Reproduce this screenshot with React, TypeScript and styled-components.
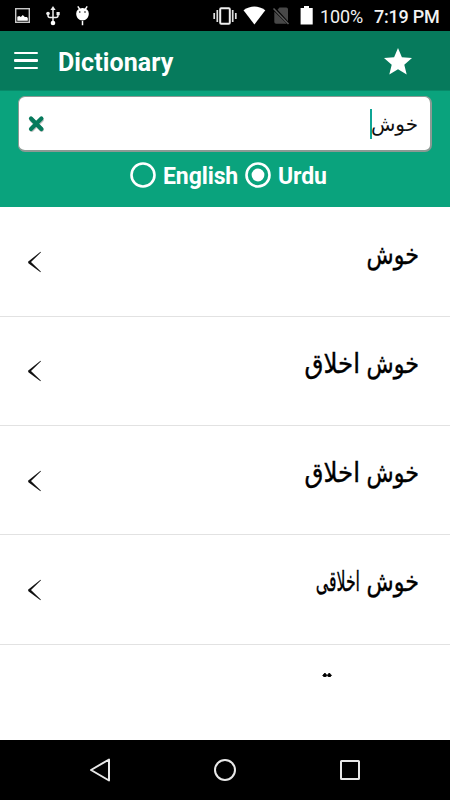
import React from "react";
import styled, { createGlobalStyle } from "styled-components";

const GlobalStyle = createGlobalStyle`
  * { box-sizing: border-box; }
  html, body { margin: 0; padding: 0; background: #fff; }
  body { font-family: Roboto, "Liberation Sans", sans-serif; }
`;

const Screen = styled.div`
  width: 450px;
  height: 800px;
  display: flex;
  flex-direction: column;
  overflow: hidden;
  background: #fff;
`;

const StatusBar = styled.div`
  height: 31px;
  flex: none;
  display: flex;
  background: #000;
  color: #f2f2f2;
`;

const StatusIcons = styled.svg<{ $w: number }>`
  width: ${(p) => p.$w}px;
  height: 31px;
  flex: none;
  display: block;
`;

const Spacer = styled.div`
  flex: 1;
`;

const Battery = styled.span`
  width: 54px;
  font-size: 18px;
  line-height: 33px;
  letter-spacing: -0.15px;
  white-space: nowrap;
`;

const Clock = styled.span`
  width: 76px;
  font-size: 18px;
  font-weight: 500;
  line-height: 33px;
  letter-spacing: -0.25px;
  white-space: nowrap;
`;

const AppBar = styled.header`
  height: 59px;
  flex: none;
  display: flex;
  align-items: center;
  padding: 0 38px 0 14px;
  background: #067a5c;
  color: #fff;
`;

const MenuButton = styled.button`
  width: 24px;
  height: 17px;
  padding: 0;
  border: 0;
  background: none;
  display: flex;
  flex-direction: column;
  justify-content: space-between;
`;

const MenuLine = styled.span`
  display: block;
  width: 24px;
  height: 2.4px;
  border-radius: 1px;
  background: #fff;
`;

const Title = styled.h1`
  flex: 1;
  margin: 4px 0 0 20px;
  font-size: 25px;
  line-height: 30px;
  font-weight: 700;
  letter-spacing: 0.1px;
`;

const Star = styled.svg`
  width: 28px;
  height: 27px;
  margin-top: 2px;
`;

const SearchPanel = styled.section`
  height: 117px;
  flex: none;
  padding: 5px 18px 0 18px;
  background: #0aa37d;
  border-top: 1px solid #078a69;
`;

const SearchBox = styled.div`
  height: 56px;
  width: 414px;
  display: flex;
  align-items: center;
  justify-content: space-between;
  padding: 0 12px 0 8px;
  border: 1px solid #8b9a94;
  border-right-width: 2px;
  border-bottom-width: 2px;
  border-radius: 7px;
  background: #fff;
`;

const ClearIcon = styled.svg`
  width: 20px;
  height: 20px;
`;

const Query = styled.div`
  display: flex;
  align-items: center;
  height: 30px;
`;

const Caret = styled.span`
  width: 2px;
  height: 30px;
  background: #0fa595;
`;

const QueryText = styled.span`
  width: 46px;
  direction: rtl;
  font: 20px/30px "DejaVu Sans", sans-serif;
  color: #111;
  white-space: nowrap;
`;

const Languages = styled.div`
  display: flex;
  align-items: center;
  height: 30px;
  margin-top: 8px;
  padding-left: 112px;
  color: #fff;
`;

const Language = styled.label<{ $w: number }>`
  display: flex;
  align-items: center;
  width: ${(p) => p.$w}px;
  height: 30px;
  font-size: 23px;
  font-weight: 700;
  letter-spacing: -0.1px;
`;

const LanguageName = styled.span`
  line-height: 30px;
  padding-top: 3px;
`;

const Radio = styled.svg`
  width: 26px;
  height: 26px;
  flex: none;
  margin-right: 7px;
`;

const Results = styled.main`
  height: 470px;
  flex: none;
  overflow: hidden;
  padding-top: 0.5px;
`;

const Row = styled.div`
  height: 109.3px;
  display: flex;
  align-items: flex-start;
  justify-content: space-between;
  padding: 0 31px 0 27px;
  border-bottom: 1px solid #e2e2e2;
`;

const Chevron = styled.svg`
  width: 15px;
  height: 22px;
  margin-top: 43.5px;
`;

const Phrase = styled.div`
  direction: rtl;
  display: flex;
  gap: 7px;
  margin-top: 30px;
`;

const Word = styled.span<{ $w: number; $sx: number; $sy: number }>`
  width: ${(p) => p.$w}px;
  font: 25px/34px "DejaVu Sans", sans-serif;
  color: #000;
  white-space: nowrap;
  -webkit-text-stroke: 0.35px #000;
  transform: scale(${(p) => p.$sx}, ${(p) => p.$sy});
  transform-origin: right center;
`;

const PartialRow = styled.div`
  display: flex;
  justify-content: flex-end;
  padding: 27px 51px 0 0;
`;

const PhraseTop = styled.svg`
  width: 80px;
  height: 6px;
`;

const NavBar = styled.nav`
  height: 60px;
  flex: none;
  margin-top: auto;
  display: flex;
  align-items: center;
  justify-content: space-between;
  padding: 0 87px;
  background: #000;
`;

const NavIcon = styled.svg`
  width: 26px;
  height: 26px;
`;

type Entry = { word: string; width: number; sx: number; sy: number };

const khush: Entry = { word: "خوش", width: 52, sx: 0.89, sy: 1.1 };
const akhlaq: Entry = { word: "اخلاق", width: 56, sx: 0.98, sy: 1.1 };
const akhlaqi: Entry = { word: "اخلاقی", width: 43, sx: 0.63, sy: 1.12 };

const entries: Entry[][] = [
  [khush],
  [khush, akhlaq],
  [khush, akhlaq],
  [khush, akhlaqi],
];

function NotificationIcons() {
  return (
    <StatusIcons $w={100} viewBox="0 0 100 31">
      <rect x="15.7" y="8.7" width="13.6" height="13.6" fill="none" stroke="#c8c8c8" strokeWidth="1.4" />
      <path d="M17.3 20.8v-4l2-.8 1.5 1 2-2 2 2h2l1 1v2.8z" fill="#fff" />
      <g stroke="#eee" strokeWidth="1.5" fill="none">
        <path d="M53 9v14M48 13v2.5q0 2 2 2h3M58 12.5v3q0 2-2 2h-3" />
      </g>
      <path d="M53 6l2.6 4h-5.2z" fill="#eee" />
      <circle cx="53" cy="23" r="2.3" fill="#fff" />
      <circle cx="48" cy="13.5" r="1.8" fill="#eee" />
      <rect x="56.5" y="12" width="3.2" height="3.2" fill="#eee" />
      <path d="M76.2 13.5a6.3 5.6 0 0 1 12.6 0c0 4-2.6 7-6.3 7s-6.3-3-6.3-7z" fill="#fff" />
      <path d="M77.8 6.3l2 3M87.2 6.3l-2 3M82.5 21v4.3" stroke="#fff" strokeWidth="1.5" />
      <circle cx="79.8" cy="12" r=".8" fill="#000" />
      <circle cx="85" cy="12" r=".8" fill="#000" />
    </StatusIcons>
  );
}

function SystemIcons() {
  return (
    <StatusIcons $w={107} viewBox="213 0 107 31">
      <rect x="220.2" y="8.2" width="9.6" height="15.6" rx="1" fill="none" stroke="#eee" strokeWidth="2" />
      <path d="M217.3 10v12M232.7 10v12M214.2 13v6M235.8 13v6" stroke="#ddd" strokeWidth="1.7" />
      <path d="M243.5 10.3q10.9-7.5 21.8 0L254.4 24.6z" fill="#fff" />
      <path d="M277.5 9.7l2-2.2h6.7q1.8 0 1.8 1.8v12zM274.3 11.5l12.5 12.3h-10.7q-1.8 0-1.8-1.8z" fill="#484848" />
      <path d="M273.5 8.5l15 15.5" stroke="#5c5c5c" strokeWidth="1.5" />
      <path d="M301 8h3V6h5v2h3.7v16.6H300.6V8z" fill="#fff" />
    </StatusIcons>
  );
}

function RadioMark({ on = false }: { on?: boolean }) {
  return (
    <Radio viewBox="0 0 26 26">
      <circle cx="13" cy="13" r="11.5" fill="none" stroke="#fff" strokeWidth="2.6" />
      {on && <circle cx="13" cy="13" r="6.4" fill="#fff" />}
    </Radio>
  );
}

export default function App() {
  return (
    <>
      <GlobalStyle />
      <Screen>
        <StatusBar>
          <NotificationIcons />
          <Spacer />
          <SystemIcons />
          <Battery>100%</Battery>
          <Clock>7:19 PM</Clock>
        </StatusBar>
        <AppBar>
          <MenuButton aria-label="Menu">
            <MenuLine />
            <MenuLine />
            <MenuLine />
          </MenuButton>
          <Title>Dictionary</Title>
          <Star viewBox="0 0 28 27">
            <path d="M14 0l3.9 9.3 10.1.8-7.7 6.6 2.4 9.9-8.7-5.3-8.7 5.3 2.4-9.9L0 10.1l10.1-.8z" fill="#fff" />
          </Star>
        </AppBar>
        <SearchPanel>
          <SearchBox>
            <ClearIcon viewBox="0 0 20 20">
              <path d="M4.8 5.8l9.8 9.8M14.6 5.8l-9.8 9.8" stroke="#777" strokeOpacity=".45" strokeWidth="4.6" strokeLinecap="round" />
              <path d="M4 4.6l10.4 10.4M14.4 4.6L4 15" stroke="#067a5c" strokeWidth="4.2" strokeLinecap="round" />
            </ClearIcon>
            <Query>
              <Caret />
              <QueryText>خوش</QueryText>
            </Query>
          </SearchBox>
          <Languages>
            <Language $w={115}>
              <RadioMark />
              <LanguageName>English</LanguageName>
            </Language>
            <Language $w={90}>
              <RadioMark on />
              <LanguageName>Urdu</LanguageName>
            </Language>
          </Languages>
        </SearchPanel>
        <Results>
          {entries.map((phrase, i) => (
            <Row key={i}>
              <Chevron viewBox="0 0 15 22">
                <path d="M13.5 .8L1 10.8l.4 1.4L13.5 21.2l.3-.7L4 11 14 1.3z" fill="#111" />
              </Chevron>
              <Phrase>
                {phrase.map((e) => (
                  <Word key={e.word} $w={e.width} $sx={e.sx} $sy={e.sy}>
                    {e.word}
                  </Word>
                ))}
              </Phrase>
            </Row>
          ))}
          <PartialRow>
            <PhraseTop viewBox="0 0 80 6">
              <path d="M5.9 1L8 3.4 5.9 5.6 3.7 3.4zM10.3 1l2.2 2.4-2.2 2.2-2.2-2.2z" fill="#000" stroke="#000" strokeWidth=".8" />
              <path d="M77.5 5h1v1h-1z" fill="#ddd" />
            </PhraseTop>
          </PartialRow>
        </Results>
        <NavBar>
          <NavIcon viewBox="0 0 26 26">
            <path d="M22 2.5v21L4 13z" fill="none" stroke="#e8e8e8" strokeWidth="2" strokeLinejoin="round" />
          </NavIcon>
          <NavIcon viewBox="0 0 26 26">
            <circle cx="13" cy="13" r="10" fill="none" stroke="#e8e8e8" strokeWidth="2" />
          </NavIcon>
          <NavIcon viewBox="0 0 26 26">
            <rect x="4" y="4" width="18" height="18" rx=".5" fill="none" stroke="#e8e8e8" strokeWidth="2" />
          </NavIcon>
        </NavBar>
      </Screen>
    </>
  );
}
